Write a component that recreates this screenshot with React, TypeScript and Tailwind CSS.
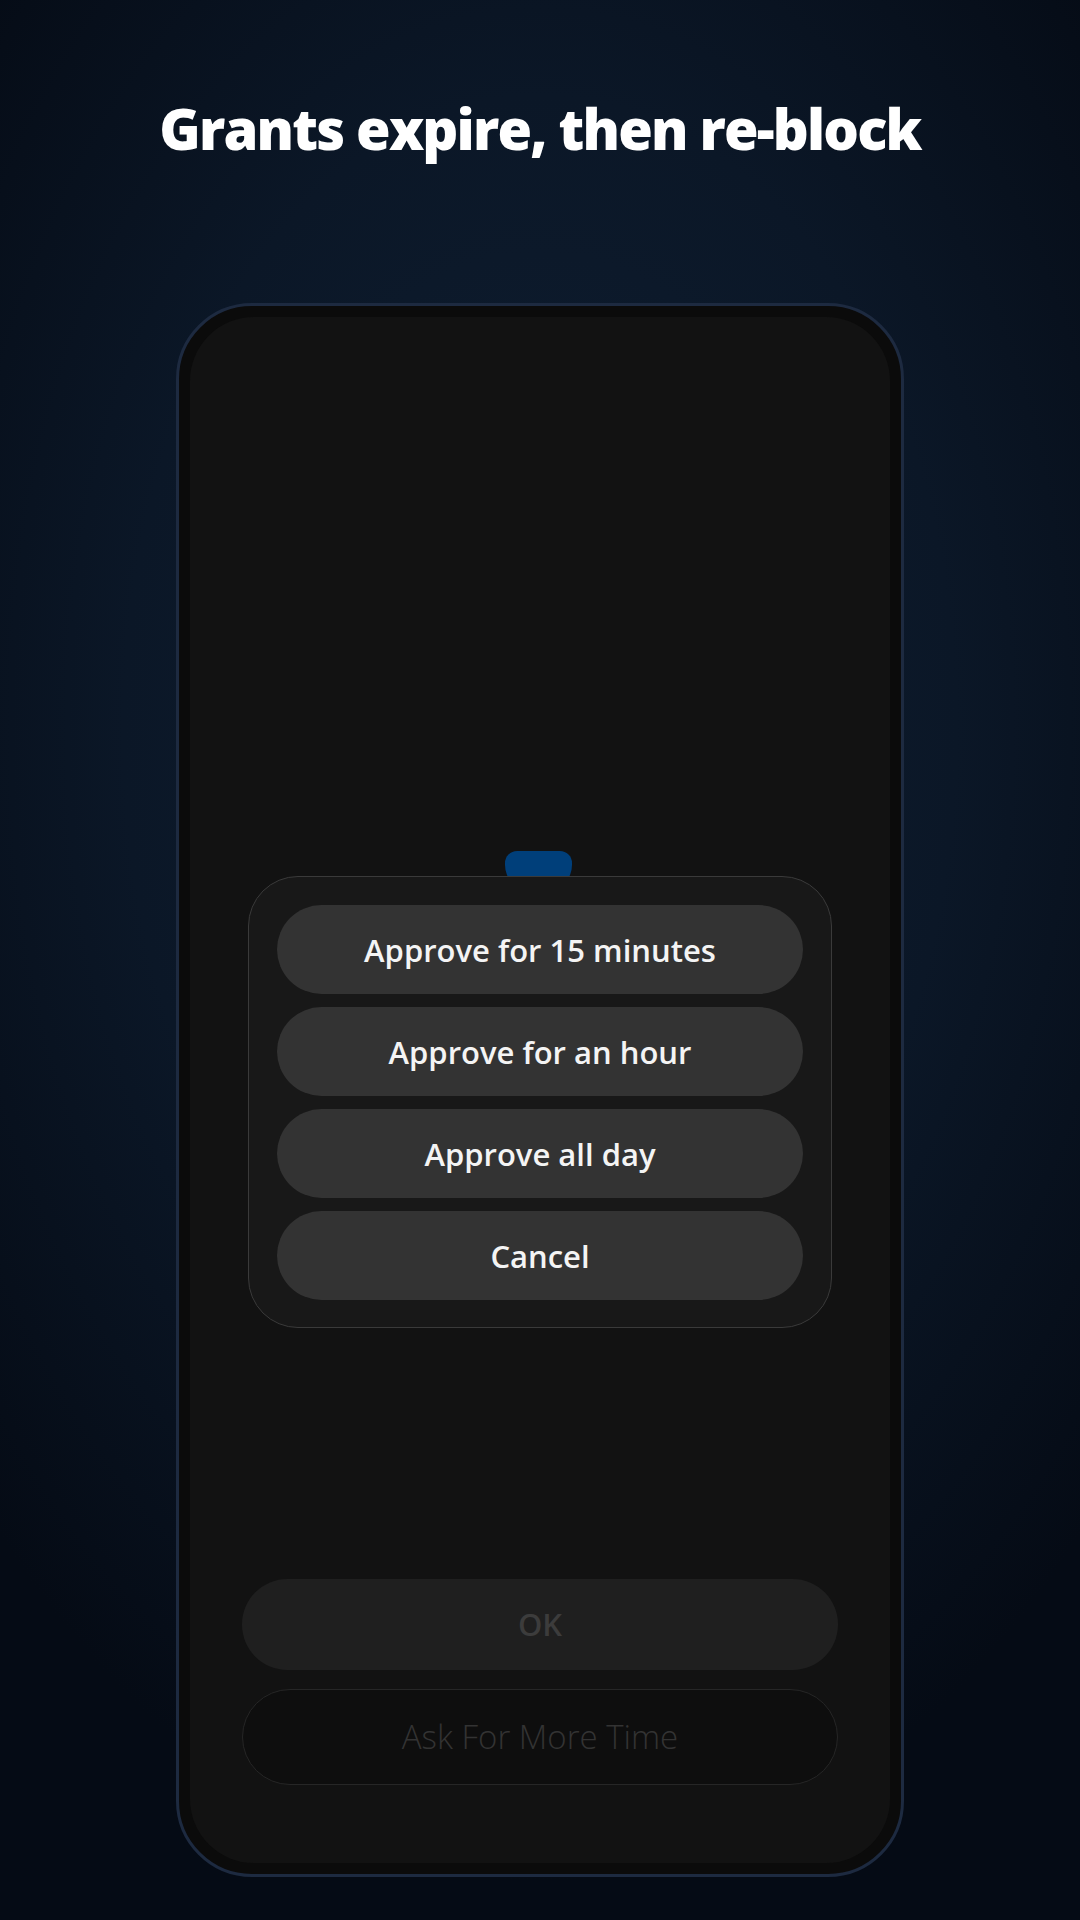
import React from "react";

const font = { fontFamily: '"Open Sans", "Noto Sans", sans-serif' };

export default function App() {
  return (
    <div
      className="w-[1080px] h-[1920px] flex flex-col items-center overflow-hidden bg-[radial-gradient(ellipse_70%_60%_at_50%_38%,#0f1f33_0%,#0b1727_55%,#050b15_100%)]"
      style={font}
    >
      <h1 className="pt-[96px] text-[56px] leading-[64px] font-extrabold text-white tracking-[-1.8px]">
        Grants expire, then re-block
      </h1>
      <div className="mt-[143px] w-[728px] h-[1574px] rounded-[76px] border-[3px] border-[#1d2a40] bg-[#0b0b0b] p-[11px]">
        <div className="w-full h-full rounded-[64px] bg-[#121212] flex flex-col items-center">
          <div className="relative mt-[534px] w-[584px] pt-[25px]">
            <div className="absolute left-[257px] top-0 w-[67px] h-[40px] bg-[#003f7a] rounded-t-[12px] rounded-b-[26px]" />
            <div className="relative w-[584px] rounded-[50px] border border-[#3a3a3a] bg-[#181818] px-[28px] pt-[28px] pb-[27px] flex flex-col gap-[13px]">
              {["Approve for 15 minutes", "Approve for an hour", "Approve all day", "Cancel"].map((t) => (
                <div
                  key={t}
                  className="h-[89px] rounded-full bg-[#333333] flex items-center justify-center text-[31px] font-semibold text-[#f4f4f4] pt-[2px]"
                >
                  {t}
                </div>
              ))}
            </div>
          </div>
          <div className="mt-auto w-full px-[52px] pb-[78px] flex flex-col gap-[19px]">
            <div className="h-[91px] rounded-full bg-[#1f1f1f] flex items-center justify-center text-[31px] font-semibold text-[#3c3c3c]">
              OK
            </div>
            <div className="h-[96px] rounded-full border border-[#262626] bg-[#0e0e0e] flex items-center justify-center text-[33px] font-light text-[#333333]">
              Ask For More Time
            </div>
          </div>
        </div>
      </div>
    </div>
  );
}
